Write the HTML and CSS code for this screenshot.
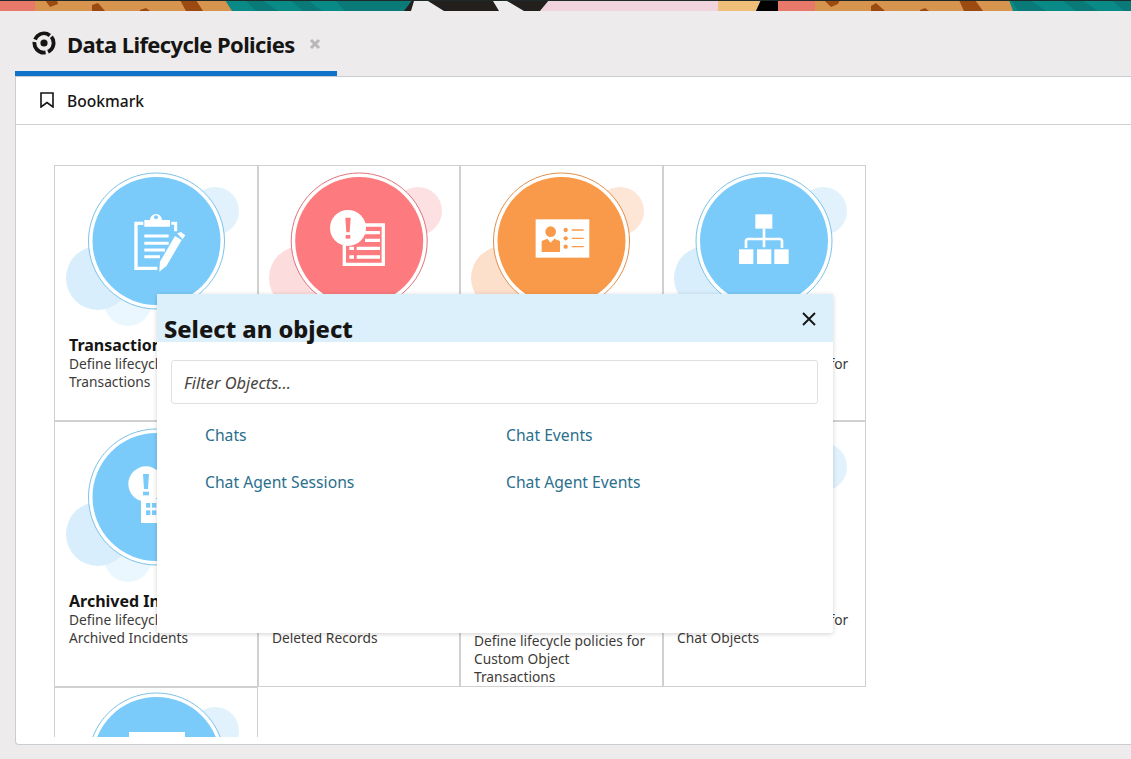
FILE: index.html
```html
<!DOCTYPE html>
<html lang="en">
<head>
<meta charset="utf-8">
<title>Data Lifecycle Policies</title>
<link rel="stylesheet" href="styles.css">
</head>
<body>
<svg class="banner" viewBox="0 0 1131 11" preserveAspectRatio="none" aria-hidden="true">
  <rect width="1131" height="11" fill="#098a87"/>
  <path d="M245 0H262L278 11H256Z M290 0H308L322 11H303Z M335 0H410L405 11H345Z" fill="#0a7a78"/>
  <path d="M1011 0H1030L1046 11H1018Z M1062 0H1082L1098 11H1076Z M1112 0H1131V11H1124Z" fill="#0a7a78"/>
  <path d="M0 0H35V11H0Z M778 0H815V11H778Z" fill="#e8786a"/>
  <path d="M35 0H225L232 11H35Z M815 0H1009L1013 11H815Z" fill="#d6944f"/>
  <path d="M45 0H57L58 4L50 7Z M92 5L98 3L105 11H92Z M140 10L146 8L150 11H140Z M180 0H196L203 11H186Z M824 0H840L838 4L831 7Z M871 6L876 3L885 11H871Z M920 10L925 8L929 11H920Z M959 0H975L983 11H964Z" fill="#9b4a12"/>
  <path d="M412 0H550L540 11H404Z" fill="#231f1c"/>
  <path d="M414 1H428L444 11H411Z M493 1H507L524 11H499Z" fill="#ececec"/>
  <path d="M549 0H718V11H540Z" fill="#f0d3dc"/>
  <path d="M718 0H761L756 11H718Z" fill="#efbe78"/>
  <path d="M761 0H778V11H756Z" fill="#000"/>
  <rect width="1131" height="1" fill="#1e2a2a"/>
</svg>

<main class="shell">
  <header class="tabbar">
    <div class="tab">
      <svg class="tab-logo" viewBox="0 0 24 24" aria-hidden="true">
        <circle cx="12" cy="12" r="9.6" class="logo-arc" transform="rotate(-40 12 12)"/>
        <circle cx="12" cy="12" r="3.6" class="logo-dot"/>
      </svg>
      <span class="tab-title">Data Lifecycle Policies</span>
      <svg class="tab-close" viewBox="0 0 12 12" aria-hidden="true"><path d="M2 2L10 10M10 2L2 10"/></svg>
    </div>
  </header>

  <section class="panel">
    <div class="toolbar">
      <svg class="bookmark-icon" viewBox="0 0 14 16" aria-hidden="true"><path d="M1 1H13V15L7 10.5L1 15Z"/></svg>
      <span class="bookmark-label">Bookmark</span>
    </div>

    <div class="scroller">
      <div class="cards">
        <article class="card blue">
          <svg class="art" viewBox="0 0 202 170" aria-hidden="true">
            <circle class="b3" cx="73" cy="136" r="24"/><circle class="b1" cx="43" cy="112" r="32"/><circle class="b2" cx="160" cy="45" r="24"/>
            <circle class="ring" cx="101.5" cy="75" r="68"/><circle class="disc" cx="101.5" cy="75" r="64"/>
            <g transform="translate(-5 -6) scale(.3333)">
              <path d="M280 190H258V325H322" class="ln-w" stroke-width="10"/>
              <path d="M283 200V180H300A18 18 0 0 1 336 180H360V200Z" class="fill-w"/>
              <circle cx="318" cy="172" r="6" class="fill-c"/>
              <path d="M364 190H377V214" class="ln-w" stroke-width="9"/>
              <path d="M283 228H356M283 250H356M283 270H345M283 290H330" class="ln-w" stroke-width="9"/>
              <path d="M328 335L330 305L375 228L395 240L350 317Z" class="fill-w"/>
              <path d="M381 220L393 216L406 226L398 238Z" class="fill-w"/>
            </g>
          </svg>
          <h2 class="card-title">Transactions</h2>
          <p class="card-desc">Define lifecycle policies for Transactions</p>
        </article>

        <article class="card red inner">
          <svg class="art" viewBox="0 0 202 170" aria-hidden="true">
            <circle class="b3" cx="72" cy="136" r="24"/><circle class="b1" cx="42" cy="112" r="32"/><circle class="b2" cx="159" cy="45" r="24"/>
            <circle class="ring" cx="100.2" cy="75" r="68"/><circle class="disc" cx="100.2" cy="75" r="64"/>
            <g transform="translate(-4 -6) scale(.3333)">
              <path d="M268 195H385V313H268Z" class="ln-w" stroke-width="10"/>
              <path d="M330 218H375M330 241H375M305 265H375M305 291H375" class="ln-w" stroke-width="10"/>
              <path d="M283 265H297M283 291H297" class="ln-w" stroke-width="10"/>
              <circle cx="279" cy="204" r="54" class="fill-w"/>
              <path d="M271 173H287L284 217H274Z" class="fill-c"/>
              <rect x="272" y="225" width="14" height="11" class="fill-c"/>
            </g>
          </svg>
          <h2 class="card-title">Incidents</h2>
          <p class="card-desc">Define lifecycle policies for Incidents</p>
        </article>

        <article class="card orange inner">
          <svg class="art" viewBox="0 0 202 170" aria-hidden="true">
            <circle class="b3" cx="72" cy="136" r="24"/><circle class="b1" cx="42" cy="112" r="32"/><circle class="b2" cx="159" cy="45" r="24"/>
            <circle class="ring" cx="100.5" cy="75" r="68"/><circle class="disc" cx="100.5" cy="75" r="64"/>
            <g transform="translate(-1 -6) scale(.3333)">
              <rect x="227" y="178" width="161" height="115" class="fill-w"/>
              <circle cx="272" cy="215" r="16" class="fill-c"/>
              <path d="M245 276V243L262 236L272 248L283 236L300 243V276Z" class="fill-c"/>
              <circle cx="317" cy="210" r="6.5" class="fill-c"/><circle cx="317" cy="235" r="6.5" class="fill-c"/><circle cx="317" cy="260" r="6.5" class="fill-c"/>
              <path d="M335 210H371M335 235H371M335 260H371" class="ln-c" stroke-width="4"/>
            </g>
          </svg>
          <h2 class="card-title">Contacts</h2>
          <p class="card-desc">Define lifecycle policies for Contacts</p>
        </article>

        <article class="card blue inner">
          <svg class="art" viewBox="0 0 202 170" aria-hidden="true">
            <circle class="b3" cx="72" cy="136" r="24"/><circle class="b1" cx="42" cy="112" r="32"/><circle class="b2" cx="159" cy="45" r="24"/>
            <circle class="ring" cx="100" cy="75" r="68"/><circle class="disc" cx="100" cy="75" r="64"/>
            <g transform="translate(-4 -6) scale(.3333)">
              <rect x="286" y="163" width="51" height="43" class="fill-w"/>
              <path d="M312 206V262M258 264V244Q258 237 265 237H359Q366 237 366 244V264" class="ln-w" stroke-width="8"/>
              <rect x="237" y="268" width="43" height="44" class="fill-w"/><rect x="291" y="268" width="43" height="44" class="fill-w"/><rect x="343" y="268" width="43" height="44" class="fill-w"/>
            </g>
          </svg>
          <h2 class="card-title">Organizations</h2>
          <p class="card-desc">Define lifecycle policies for Organizations</p>
        </article>

        <article class="card blue">
          <svg class="art" viewBox="0 0 202 170" aria-hidden="true">
            <circle class="b3" cx="73" cy="136" r="24"/><circle class="b1" cx="43" cy="112" r="32"/><circle class="b2" cx="160" cy="45" r="24"/>
            <circle class="ring" cx="101.5" cy="75" r="68"/><circle class="disc" cx="101.5" cy="75" r="64"/>
            <g transform="translate(-5 -3) scale(.3333)">
              <rect x="273" y="240" width="82" height="72" class="fill-w"/>
              <rect x="288" y="252" width="13" height="14" class="fill-c"/><rect x="306" y="252" width="13" height="14" class="fill-c"/>
              <rect x="288" y="274" width="13" height="14" class="fill-c"/><rect x="306" y="274" width="13" height="14" class="fill-c"/>
              <circle cx="288" cy="195" r="53" class="fill-w"/>
              <path d="M279 165H297L294 210H282Z" class="fill-c"/>
              <rect x="279" y="218" width="18" height="11" class="fill-c"/>
            </g>
          </svg>
          <h2 class="card-title">Archived Incidents</h2>
          <p class="card-desc">Define lifecycle policies for Archived Incidents</p>
        </article>

        <article class="card red inner">
          <svg class="art" viewBox="0 0 202 170" aria-hidden="true">
            <circle class="b3" cx="72" cy="136" r="24"/><circle class="b1" cx="42" cy="112" r="32"/><circle class="b2" cx="159" cy="45" r="24"/>
            <circle class="ring" cx="100.2" cy="75" r="68"/><circle class="disc" cx="100.2" cy="75" r="64"/>
          </svg>
          <h2 class="card-title">Deleted Records</h2>
          <p class="card-desc">Define lifecycle policies for Deleted Records</p>
        </article>

        <article class="card orange inner">
          <svg class="art" viewBox="0 0 202 170" aria-hidden="true">
            <circle class="b3" cx="72" cy="136" r="24"/><circle class="b1" cx="42" cy="112" r="32"/><circle class="b2" cx="159" cy="45" r="24"/>
            <circle class="ring" cx="100.5" cy="75" r="68"/><circle class="disc" cx="100.5" cy="75" r="64"/>
          </svg>
          <h2 class="card-title card-title-wrapped">Custom Object Transactions</h2>
          <p class="card-desc">Define lifecycle policies for Custom Object Transactions</p>
        </article>

        <article class="card blue inner">
          <svg class="art" viewBox="0 0 202 170" aria-hidden="true">
            <circle class="b3" cx="72" cy="136" r="24"/><circle class="b1" cx="42" cy="112" r="32"/><circle class="b2" cx="159" cy="45" r="24"/>
            <circle class="ring" cx="100" cy="75" r="68"/><circle class="disc" cx="100" cy="75" r="64"/>
          </svg>
          <h2 class="card-title">Chat Objects</h2>
          <p class="card-desc">Define lifecycle policies for Chat Objects</p>
        </article>

        <article class="card blue card-tail">
          <svg class="art" viewBox="0 0 202 170" aria-hidden="true">
            <circle class="b3" cx="73" cy="136" r="24"/><circle class="b1" cx="43" cy="112" r="32"/><circle class="b2" cx="160" cy="45" r="24"/>
            <circle class="ring" cx="101.5" cy="75" r="68"/><circle class="disc" cx="101.5" cy="75" r="64"/>
            <rect x="74" y="46" width="56" height="50" class="fill-w"/>
          </svg>
        </article>
      </div>
    </div>
  </section>
</main>

<div class="modal" role="dialog" aria-label="Select an object">
  <div class="modal-head">
    <h1 class="modal-title">Select an object</h1>
    <svg class="modal-close" viewBox="0 0 14 14" aria-hidden="true"><path d="M1 1L13 13M13 1L1 13"/></svg>
  </div>
  <div class="modal-body">
    <input class="filter" type="text" placeholder="Filter Objects...">
    <ul class="objects">
      <li><a class="object-link" href="#">Chats</a></li>
      <li><a class="object-link" href="#">Chat Events</a></li>
      <li><a class="object-link" href="#">Chat Agent Sessions</a></li>
      <li><a class="object-link" href="#">Chat Agent Events</a></li>
    </ul>
  </div>
</div>
</body>
</html>
```

FILE: styles.css
```css
* { box-sizing: border-box; }

html, body {
  margin: 0;
  height: 100%;
  overflow: hidden;
}

body {
  display: flex;
  flex-direction: column;
  background: #edebec;
  font-family: "Noto Sans", "Open Sans", sans-serif;
  color: #161513;
}

.banner {
  display: block;
  flex: none;
  width: 100%;
  height: 11px;
}

.shell {
  flex: 1;
  display: flex;
  flex-direction: column;
  min-height: 0;
  padding: 0 0 14px 15px;
}

.tabbar {
  flex: none;
  height: 65px;
}

.tab {
  width: 322px;
  height: 65px;
  display: flex;
  align-items: center;
  padding: 3px 0 0 17px;
  border-bottom: 5px solid #0f73c9;
}

.tab-logo {
  flex: none;
  width: 24px;
  height: 24px;
  margin-right: 11px;
}

.logo-arc {
  fill: none;
  stroke: #161513;
  stroke-width: 3.8;
  stroke-dasharray: 17.6 2.5;
}

.logo-dot {
  fill: #161513;
}

.tab-title {
  margin-top: 2px;
  font-size: 22px;
  font-weight: 700;
  line-height: 30px;
  letter-spacing: -0.6px;
  white-space: nowrap;
}

.tab-close {
  flex: none;
  width: 12px;
  height: 12px;
  margin: 3px 0 0 14px;
  fill: none;
  stroke: #b8b8b8;
  stroke-width: 3;
}

.panel {
  flex: 1;
  min-height: 0;
  display: flex;
  flex-direction: column;
  background: #fff;
  border-top: 1px solid #c9cdd1;
  border-left: 1px solid #c9cdd1;
  border-bottom: 1px solid #c9cdd1;
  border-bottom-left-radius: 4px;
  padding-bottom: 7px;
}

.toolbar {
  flex: none;
  height: 48px;
  display: flex;
  align-items: center;
  padding-left: 24px;
  border-bottom: 1px solid #d0d0d0;
}

.bookmark-icon {
  flex: none;
  width: 14px;
  height: 16px;
  margin: 0 13px 2px 0;
  fill: none;
  stroke: #161513;
  stroke-width: 1.6;
}

.bookmark-label {
  font-size: 15.6px;
  font-weight: 500;
  line-height: 20px;
}

.scroller {
  flex: 1;
  min-height: 0;
  overflow: hidden;
  padding: 40px 0 0 38px;
}

.cards {
  display: grid;
  grid-template-columns: 204px 202px 203px 203px;
  width: 812px;
  align-items: stretch;
}

.card {
  min-height: 256px;
  border: 1px solid #d0d0d0;
  background: #fff;
}

.art {
  display: block;
  width: 202px;
  height: 170px;
}

.card-tail .art {
  margin-top: -2px;
}

.card-title {
  margin: 0;
  padding: 0 12px 0 14px;
  font-size: 16px;
  font-weight: 700;
  line-height: 18.5px;
  color: #161513;
}

.card-title-wrapped {
  margin-bottom: 3px;
}

.card-desc {
  margin: 0;
  padding: 0 12px 0 14px;
  font-size: 13.75px;
  line-height: 18px;
  color: #3d3b38;
}

.inner .card-title,
.inner .card-desc {
  padding-left: 13px;
}

.blue .disc { fill: #7bcbfa; }
.blue .ring { stroke: #7bc3e8; }
.blue .b1 { fill: #d8eefc; }
.blue .b2 { fill: #e1f2fd; }
.blue .b3 { fill: #ebf7fe; }
.blue .fill-c { fill: #7bcbfa; }
.blue .ln-c { stroke: #7bcbfa; }

.red .disc { fill: #fd7b7e; }
.red .ring { stroke: #e0737a; }
.red .b1 { fill: #fddcdd; }
.red .b2 { fill: #fde1e2; }
.red .b3 { fill: #feecec; }
.red .fill-c { fill: #fd7b7e; }
.red .ln-c { stroke: #fd7b7e; }

.orange .disc { fill: #f99a4a; }
.orange .ring { stroke: #e08f4c; }
.orange .b1 { fill: #fde0cb; }
.orange .b2 { fill: #fde6d6; }
.orange .b3 { fill: #feefe5; }
.orange .fill-c { fill: #f99a4a; }
.orange .ln-c { stroke: #f99a4a; }

.ring { fill: #fff; stroke-width: 1; }
.fill-w { fill: #fff; }
.ln-w { fill: none; stroke: #fff; }
.ln-c { fill: none; }

.modal {
  position: absolute;
  left: 157px;
  top: 294px;
  width: 676px;
  height: 339px;
  background: #fff;
  box-shadow: 0 1px 5px rgba(0, 0, 0, 0.18);
  border-radius: 2px;
}

.modal-head {
  height: 48px;
  display: flex;
  align-items: flex-end;
  justify-content: space-between;
  background: #dcf0fb;
  padding: 0 17px 0 7px;
}

.modal-title {
  margin: 0 0 -2px;
  font-size: 23.6px;
  font-weight: 800;
  line-height: 30px;
  color: #161513;
}

.modal-close {
  flex: none;
  width: 14px;
  height: 14px;
  margin-bottom: 16px;
  fill: none;
  stroke: #161513;
  stroke-width: 1.9;
}

.modal-body {
  padding: 18px 15px 0 14px;
}

.filter {
  display: block;
  width: 100%;
  height: 44px;
  padding: 0 12px;
  border: 1px solid #e0e0e0;
  border-radius: 3px;
  background: #fff;
  font-family: inherit;
  font-size: 16.4px;
  font-style: italic;
}

.filter::placeholder {
  color: #47453f;
  opacity: 1;
}

.objects {
  display: grid;
  grid-template-columns: 301px 301px;
  grid-auto-rows: 47px;
  margin: 7px 0 0;
  padding: 0 0 0 34px;
  list-style: none;
}

.objects li {
  display: flex;
  align-items: center;
}

.object-link {
  font-size: 15.7px;
  line-height: 22px;
  color: #2a6f8e;
  text-decoration: none;
}
```
